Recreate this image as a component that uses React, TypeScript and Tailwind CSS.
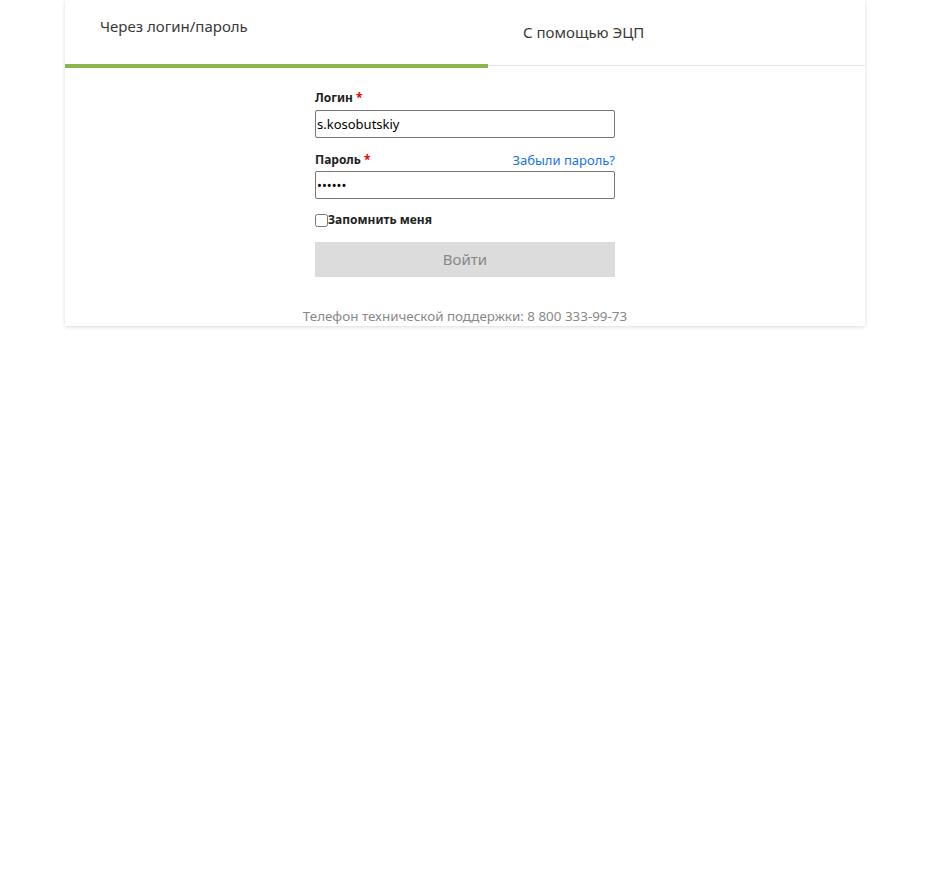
export default function App() {
  return (
    <div className="min-h-screen bg-white" style={{ fontFamily: '"Noto Sans", "Open Sans", sans-serif' }}>
      <div className="mx-[65px] w-[800px] bg-white shadow-[0_1px_4px_rgba(0,0,0,0.15)]">
        {/* Tabs */}
        <div className="flex h-[66px] border-b border-[#e5e5e5]">
          <div className="relative w-[423px] pl-[35px] pt-[14px]">
            <span className="text-[15px] text-[#3a3a3a]">Через логин/пароль</span>
            <div className="absolute left-0 right-0 bottom-[-3px] h-[4px] bg-[#8bb54e]" />
          </div>
          <div className="flex-1 pl-[35px] pt-[20px]">
            <span className="text-[15px] text-[#3a3a3a]">С помощью ЭЦП</span>
          </div>
        </div>

        {/* Form */}
        <div className="mx-auto w-[300px] pt-[23px]">
          <label className="block text-[12px] font-bold text-[#222] leading-[18px]">
            Логин <span className="text-[#e00]">*</span>
          </label>
          <input
            className="mt-[3px] block h-[28px] w-full rounded-[2px] border border-[#767676] px-[1px] text-[13px] text-black outline-none"
            defaultValue="s.kosobutskiy"
          />
          <div className="mt-[13px] flex items-end justify-between leading-[18px]">
            <label className="text-[12px] font-bold text-[#222]">
              Пароль <span className="text-[#e00]">*</span>
            </label>
            <a className="text-[13px] text-[#1a73e8]" href="#">Забыли пароль?</a>
          </div>
          <input
            type="password"
            className="mt-[2px] block h-[28px] w-full rounded-[2px] border border-[#767676] px-[1px] text-[13px] text-black outline-none"
            defaultValue="123456"
          />
          <label className="mt-[12px] flex items-center text-[12px] font-bold text-[#222]">
            <input type="checkbox" className="m-0 h-[13px] w-[13px]" />
            Запомнить меня
          </label>
          <button className="mt-[13px] block h-[35px] w-full bg-[#dcdcdc] text-[15px] text-[#888]">
            Войти
          </button>
        </div>
        <div className="pt-[30px] pb-[1px] text-center text-[13.4px] leading-[18px] text-[#888]">
          Телефон технической поддержки: 8 800 333-99-73
        </div>
      </div>
    </div>
  );
}
